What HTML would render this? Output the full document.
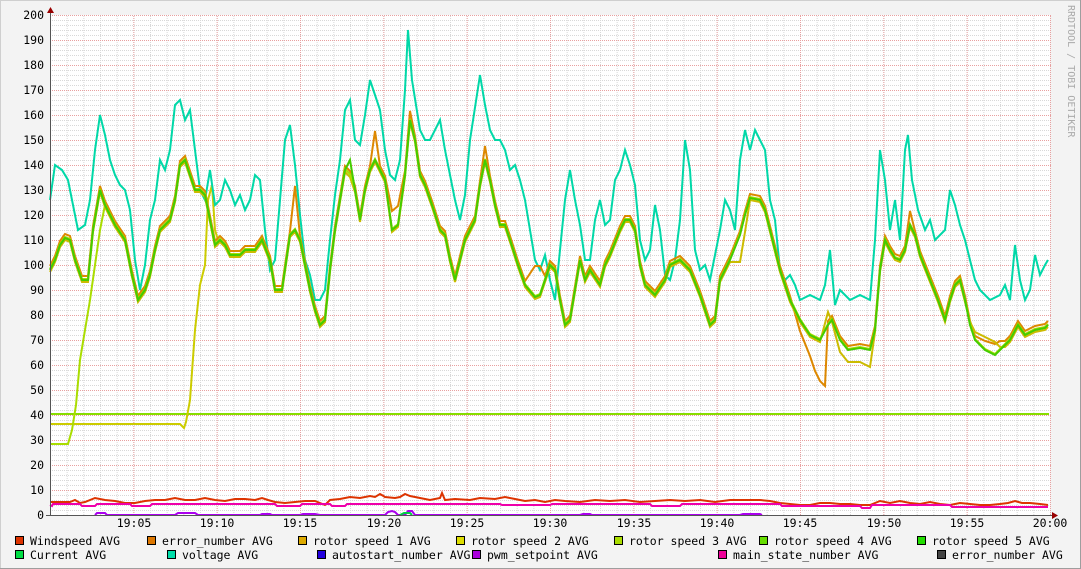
<!DOCTYPE html>
<html><head><meta charset="utf-8"><style>
html,body{margin:0;padding:0;background:#f3f3f3;}
svg{display:block;}
text{font-family:"DejaVu Sans Mono","Liberation Mono",monospace;font-size:11.5px;fill:#000;}
</style></head><body>
<svg width="1081" height="569" viewBox="0 0 1081 569" xmlns="http://www.w3.org/2000/svg">
<defs>
<pattern id="hmin" x="0" y="15" width="1000" height="5" patternUnits="userSpaceOnUse">
<line x1="0" y1="0.5" x2="1000" y2="0.5" stroke="#d8d8d8" stroke-width="1" stroke-dasharray="1,1"/>
</pattern>
<pattern id="vmin" x="50" y="0" width="16.667" height="500" patternUnits="userSpaceOnUse">
<line x1="0.5" y1="0" x2="0.5" y2="500" stroke="#d8d8d8" stroke-width="1" stroke-dasharray="1,1"/>
</pattern>
<pattern id="hmaj" x="0" y="15" width="1000" height="25" patternUnits="userSpaceOnUse">
<line x1="0" y1="0.5" x2="1000" y2="0.5" stroke="#e8a0a0" stroke-width="1" stroke-dasharray="1,1"/>
</pattern>
<pattern id="vmaj" x="50" y="0" width="83.333" height="500" patternUnits="userSpaceOnUse">
<line x1="0.5" y1="0" x2="0.5" y2="500" stroke="#e8a0a0" stroke-width="1" stroke-dasharray="1,1"/>
</pattern>
</defs>
<rect x="0" y="0" width="1081" height="569" fill="#f3f3f3"/>
<line x1="0" y1="0.5" x2="1081" y2="0.5" stroke="#cfcfcf"/>
<line x1="0.5" y1="0" x2="0.5" y2="569" stroke="#cfcfcf"/>
<line x1="1080.5" y1="0" x2="1080.5" y2="569" stroke="#9e9e9e"/>
<line x1="0" y1="568.5" x2="1081" y2="568.5" stroke="#9e9e9e"/>
<rect x="50" y="15" width="1000" height="500" fill="#fff"/>
<rect x="50" y="15" width="1000" height="500" fill="url(#hmin)"/>
<rect x="50" y="15" width="1000" height="500" fill="url(#vmin)"/>
<rect x="50" y="15" width="1001" height="500" fill="url(#hmaj)"/>
<rect x="50" y="15" width="1001" height="500" fill="url(#vmaj)"/>

<g text-anchor="end">
<text x="44" y="19">200</text><text x="44" y="44">190</text><text x="44" y="69">180</text><text x="44" y="94">170</text><text x="44" y="119">160</text><text x="44" y="144">150</text><text x="44" y="169">140</text><text x="44" y="194">130</text><text x="44" y="219">120</text><text x="44" y="244">110</text><text x="44" y="269">100</text><text x="44" y="294">90</text><text x="44" y="319">80</text><text x="44" y="344">70</text><text x="44" y="369">60</text><text x="44" y="394">50</text><text x="44" y="419">40</text><text x="44" y="444">30</text><text x="44" y="469">20</text><text x="44" y="494">10</text><text x="44" y="519">0</text>
</g>
<g text-anchor="middle">
<text x="134" y="527">19:05</text><text x="217" y="527">19:10</text><text x="300" y="527">19:15</text><text x="384" y="527">19:20</text><text x="467" y="527">19:25</text><text x="550" y="527">19:30</text><text x="634" y="527">19:35</text><text x="717" y="527">19:40</text><text x="800" y="527">19:45</text><text x="884" y="527">19:50</text><text x="967" y="527">19:55</text><text x="1050" y="527">20:00</text>
</g>

<!-- constant lines -->
<polyline fill="none" stroke="#88dd00" stroke-width="2" points="50,414 1049,414"/>
<polyline fill="none" stroke="#cccc00" stroke-width="2" points="50,424 180,424 184,428 186,422 190,400 195,330 200,285 205,265 208,200 212,185 215,230 218,240"/>
<polyline fill="none" stroke="#aadd00" stroke-width="2" points="50,444 68,444 72,430 76,405 80,360 85,330 90,300 95,265 100,230 105,205"/>

<!-- voltage -->
<polyline fill="none" stroke="#00d8a8" stroke-width="2" points="50,200 55,165 62,170 68,180 72,200 78,230 85,225 90,200 95,150 100,115 105,135 110,160 115,175 120,185 125,190 130,210 135,260 140,290 145,265 150,220 155,200 160,160 165,170 170,150 175,105 180,100 185,120 190,110 195,150 200,190 205,200 210,170 215,205 220,200 225,180 230,190 235,205 240,195 245,210 250,200 255,175 260,180 265,230 270,270 275,260 280,200 285,140 290,125 295,165 300,215 305,260 310,275 315,300 320,300 325,290 330,240 335,195 340,160 345,110 350,100 355,140 360,145 365,115 370,80 375,95 380,110 385,150 390,175 395,180 400,160 405,90 408,30 412,80 420,130 425,140 430,140 440,120 445,150 455,200 460,220 465,195 470,140 480,75 485,105 490,130 495,140 500,140 505,150 510,170 515,165 520,180 525,200 530,230 535,260 540,270 545,255 550,280 555,300 560,250 565,200 570,170 575,200 580,225 585,260 590,260 595,220 600,200 605,225 610,220 615,180 620,170 625,150 630,165 635,185 640,240 645,260 650,250 655,205 660,230 665,275 670,280 675,260 680,220 685,140 690,170 695,250 700,270 705,265 710,280 715,255 720,230 725,200 730,210 735,230 740,160 745,130 750,150 755,130 760,140 765,150 770,200 775,220 780,270 785,280 790,275 795,285 800,300 810,295 820,300 825,285 830,250 835,305 840,290 850,300 860,295 870,300 875,240 880,150 885,180 890,230 895,200 900,240 905,150 908,135 912,180 918,210 925,230 930,220 935,240 945,230 950,190 955,205 960,225 965,240 970,260 975,280 980,290 990,300 1000,295 1005,285 1010,300 1015,245 1020,280 1025,300 1030,290 1035,255 1040,275 1045,265 1048,260"/>

<!-- rotor speeds -->
<g fill="none" stroke-width="2">
<polyline id="r" stroke="#dd8800" transform="translate(0,-4)" points="50,270 55,260 60,245 65,238 70,240 75,260 82,280 88,280 93,230 100,190 105,205 115,225 125,240 132,275 138,300 145,290 150,275 155,250 160,230 165,225 170,220 175,200 180,165 185,160 190,175 195,190 200,190 205,195 210,220 215,245 220,240 225,245 230,255 240,255 245,250 255,250 262,240 270,260 275,290 282,290 290,235 295,190 300,240 305,265 310,290 315,310 320,325 325,320 330,270 335,230 340,200 345,170 350,175 355,190 360,220 365,190 370,170 375,135 380,170 385,180 392,215 398,210 405,175 410,115 415,140 420,175 425,185 432,205 440,230 445,235 450,260 455,280 460,260 465,240 470,230 475,220 480,185 485,150 490,180 495,205 500,225 505,225 510,240 518,265 525,285 535,270 540,270 545,280 550,265 555,270 560,300 565,325 570,320 575,290 580,260 585,280 590,270 600,285 605,265 610,255 620,230 625,220 630,220 635,230 640,265 645,285 655,295 665,280 670,265 680,260 690,270 700,295 710,325 715,320 720,280 730,260 740,235 745,215 750,198 760,200 765,210 770,230 775,250 780,270 790,300 800,335 810,360 815,375 820,385 825,390 828,325 832,320 840,340 848,350 860,348 870,350 875,330 880,270 885,240 890,250 895,258 900,260 905,250 910,215 915,235 920,255 930,280 938,300 945,320 950,300 955,285 960,280 965,300 970,325 975,340 985,345 995,348 1000,345 1005,345 1010,340 1018,325 1025,335 1035,330 1045,328 1048,325"/>
<polyline stroke="#ccbb00" transform="translate(0,2)" points="50,270 55,260 60,245 65,238 70,240 75,260 82,280 88,280 93,230 100,190 105,205 115,225 125,240 132,275 138,300 145,290 150,275 155,250 160,230 165,225 170,220 175,200 180,165 185,160 190,175 195,190 200,190 205,195 210,220 215,245 220,240 225,245 230,255 240,255 245,250 255,250 262,240 270,260 275,290 282,290 290,235 295,230 300,240 305,265 310,290 315,310 320,325 325,320 330,270 335,230 340,200 345,170 350,175 355,190 360,220 365,190 370,170 375,160 380,170 385,180 392,230 398,225 405,175 410,120 415,140 420,175 425,185 432,205 440,230 445,235 450,260 455,280 460,260 465,240 470,230 475,220 480,185 485,160 490,180 495,205 500,225 505,225 510,240 518,265 525,285 535,297 540,295 545,280 550,265 555,270 560,300 565,325 570,320 575,290 580,260 585,280 590,270 600,285 605,265 610,255 620,230 625,220 630,220 635,230 640,265 645,285 655,295 665,280 670,265 680,260 690,270 700,295 710,325 715,320 720,280 730,260 740,260 745,230 750,198 760,200 765,210 770,230 775,250 780,270 790,300 800,320 810,335 820,340 828,310 832,320 840,350 848,360 860,360 870,365 875,330 880,270 885,240 890,250 895,258 900,260 905,250 910,225 915,235 920,255 930,280 938,300 945,320 950,300 955,285 960,280 965,300 970,320 975,330 985,335 995,340 1000,345 1005,345 1010,340 1018,325 1025,335 1035,330 1045,328 1048,325"/>
<polyline stroke="#aadd00" transform="translate(0,-1)" points="50,270 55,260 60,245 65,238 70,240 75,260 82,280 88,280 93,230 100,190 105,205 115,225 125,240 132,275 138,300 145,290 150,275 155,250 160,230 165,225 170,220 175,200 180,165 185,160 190,175 195,190 200,190 205,195 210,220 215,245 220,240 225,245 230,255 240,255 245,250 255,250 262,240 270,260 275,290 282,290 290,235 295,230 300,240 305,265 310,290 315,310 320,325 325,320 330,270 335,230 340,200 345,170 350,175 355,190 360,220 365,190 370,170 375,160 380,170 385,180 392,230 398,225 405,175 410,120 415,140 420,175 425,185 432,205 440,230 445,235 450,260 455,280 460,260 465,240 470,230 475,220 480,185 485,160 490,180 495,205 500,225 505,225 510,240 518,265 525,285 535,297 540,295 545,280 550,265 555,270 560,300 565,325 570,320 575,290 580,260 585,280 590,270 600,285 605,265 610,255 620,230 625,220 630,220 635,230 640,265 645,285 655,295 665,280 670,265 680,260 690,270 700,295 710,325 715,320 720,280 730,260 740,235 745,215 750,198 760,200 765,210 770,230 775,250 780,270 790,300 800,320 810,335 820,340 828,325 832,320 840,340 848,350 860,348 870,350 875,330 880,270 885,240 890,250 895,258 900,260 905,250 910,225 915,235 920,255 930,280 938,300 945,320 950,300 955,285 960,280 965,300 970,325 975,340 985,350 995,355 1000,350 1005,345 1010,340 1018,325 1025,335 1035,330 1045,328 1048,325"/>
<polyline stroke="#44cc00" points="50,270 55,260 60,245 65,238 70,240 75,260 82,280 88,280 93,230 100,190 105,205 115,225 125,240 132,275 138,300 145,290 150,275 155,250 160,230 165,225 170,220 175,200 180,165 185,160 190,175 195,190 200,190 205,195 210,220 215,245 220,240 225,245 230,255 240,255 245,250 255,250 262,240 270,260 275,290 282,290 290,235 295,230 300,240 305,265 310,290 315,310 320,325 325,320 330,270 335,230 340,200 345,170 350,160 355,190 360,220 365,190 370,170 375,160 380,170 385,180 392,230 398,225 405,175 410,120 415,140 420,175 425,185 432,205 440,230 445,235 450,260 455,280 460,260 465,240 470,230 475,220 480,185 485,160 490,180 495,205 500,225 505,225 510,240 518,265 525,285 535,297 540,295 545,280 550,265 555,270 560,300 565,325 570,320 575,290 580,260 585,280 590,270 600,285 605,265 610,255 620,230 625,220 630,220 635,230 640,265 645,285 655,295 665,280 670,265 680,260 690,270 700,295 710,325 715,320 720,280 730,260 740,235 745,215 750,198 760,200 765,210 770,230 775,250 780,270 790,300 800,320 810,335 820,340 828,325 832,320 840,340 848,350 860,348 870,350 875,330 880,270 885,240 890,250 895,258 900,260 905,250 910,225 915,235 920,255 930,280 938,300 945,320 950,300 955,285 960,280 965,300 970,325 975,340 985,350 995,355 1000,350 1005,345 1010,340 1018,325 1025,335 1035,330 1045,328 1048,325"/>
</g>

<!-- low series -->
<polyline fill="none" stroke="#dd3300" stroke-width="2" points="50,502 60,502 70,502 75,500 80,503 85,502 95,498 105,500 115,501 125,503 135,503 145,501 155,500 165,500 175,498 185,500 195,500 205,498 215,500 225,501 235,499 245,499 255,500 262,498 268,500 275,502 285,503 295,502 305,501 315,501 320,503 325,505 330,500 340,499 350,497 360,498 370,496 375,497 380,494 385,497 395,498 400,497 405,494 410,496 420,498 430,500 440,498 442,493 445,500 455,499 470,500 480,498 495,499 505,497 515,499 525,501 535,500 545,502 555,500 565,501 580,502 595,500 610,501 625,500 640,502 655,501 670,500 685,501 700,500 715,502 730,500 745,500 760,500 770,501 780,503 790,504 800,505 810,505 820,503 830,503 840,504 850,504 860,505 870,505 880,501 890,503 900,501 910,503 920,504 930,502 940,504 950,505 960,503 970,504 980,505 990,505 1000,504 1008,503 1015,501 1022,503 1030,503 1040,504 1048,505"/>
<polyline fill="none" stroke="#ee00aa" stroke-width="2" points="50,505 52,506 53,504 80,504 82,506 95,506 97,504 130,504 132,506 150,506 152,504 275,504 277,506 300,506 302,504 330,504 332,506 345,506 347,504 500,504 502,505 550,505 552,504 650,504 652,506 680,506 682,504 780,504 782,506 860,506 862,508 870,508 872,505 950,505 952,507 1048,507"/>
<polyline fill="none" stroke="#aa00ee" stroke-width="2" points="95,515 97,513 105,513 107,515 175,515 178,513 195,513 198,515 260,515 262,514 270,514 272,515 300,515 303,514 315,514 320,515 385,515 388,512 392,511 395,512 398,515 405,515 408,511 412,511 415,515 580,515 583,514 590,514 592,515 740,515 743,514 760,514 762,515"/>
<polyline fill="none" stroke="#00cc44" stroke-width="2" points="400,515 404,513 410,513 412,515"/>

<!-- axes -->
<line x1="50.5" y1="10" x2="50.5" y2="516" stroke="#555"/>
<line x1="46" y1="515.5" x2="1053" y2="515.5" stroke="#555"/>
<polygon points="47,13 54,13 50.5,7" fill="#990000"/>
<polygon points="1052,512 1052,519 1058,515.5" fill="#990000"/>

<text x="1068" y="5" fill="#aaaaaa" style="font-size:10px;fill:#aaaaaa" transform="rotate(90 1068 5)">RRDTOOL / TOBI OETIKER</text>

<!-- legend -->
<g stroke="#000" stroke-width="1">
<rect x="15.5" y="536.5" width="8" height="8" fill="#dd3300"/>
<rect x="147.5" y="536.5" width="8" height="8" fill="#dd7700"/>
<rect x="298.5" y="536.5" width="8" height="8" fill="#ddaa00"/>
<rect x="456.5" y="536.5" width="8" height="8" fill="#dddd00"/>
<rect x="614.5" y="536.5" width="8" height="8" fill="#aadd00"/>
<rect x="759.5" y="536.5" width="8" height="8" fill="#66dd00"/>
<rect x="917.5" y="536.5" width="8" height="8" fill="#22dd00"/>
<rect x="15.5" y="550.5" width="8" height="8" fill="#00dd44"/>
<rect x="167.5" y="550.5" width="8" height="8" fill="#00ddaa"/>
<rect x="317.5" y="550.5" width="8" height="8" fill="#2200dd"/>
<rect x="472.5" y="550.5" width="8" height="8" fill="#aa00dd"/>
<rect x="718.5" y="550.5" width="8" height="8" fill="#ee0099"/>
<rect x="937.5" y="550.5" width="8" height="8" fill="#444444"/>
</g>
<text x="30" y="545">Windspeed AVG</text>
<text x="162" y="545">error_number AVG</text>
<text x="313" y="545">rotor speed 1 AVG</text>
<text x="471" y="545">rotor speed 2 AVG</text>
<text x="629" y="545">rotor speed 3 AVG</text>
<text x="774" y="545">rotor speed 4 AVG</text>
<text x="932" y="545">rotor speed 5 AVG</text>
<text x="30" y="559">Current AVG</text>
<text x="182" y="559">voltage AVG</text>
<text x="332" y="559">autostart_number AVG</text>
<text x="487" y="559">pwm_setpoint AVG</text>
<text x="733" y="559">main_state_number AVG</text>
<text x="952" y="559">error_number AVG</text>
</svg>
</body></html>
